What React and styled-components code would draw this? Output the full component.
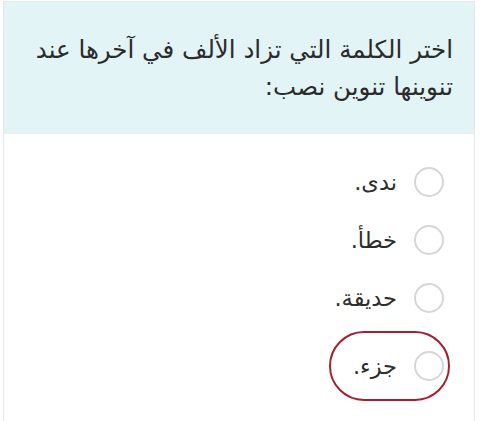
import React from "react";
import styled, { createGlobalStyle } from "styled-components";

const Global = createGlobalStyle`
  html, body { margin: 0; padding: 0; background: #ffffff; }
  body { font-family: "DejaVu Sans", "Noto Sans", sans-serif; }
`;

const Page = styled.div`
  width: 480px;
  height: 421px;
  overflow: hidden;
  padding: 1px 5px 0 3px;
  box-sizing: border-box;
`;

const Card = styled.div`
  border: 1px solid #e6e8e9;
  border-bottom: none;
  height: 440px;
  background: #ffffff;
  direction: rtl;
`;

const Header = styled.div`
  background: #e3f4f7;
  padding: 29px 21px 0 14px;
  height: 132px;
  box-sizing: border-box;
  border-bottom: 1px solid #e8eef0;
`;

const Question = styled.p`
  margin: 0;
  font-size: 24.5px;
  line-height: 37px;
  color: #2b2b2b;
  text-align: right;
`;

const Options = styled.div`
  display: flex;
  flex-direction: column;
  align-items: flex-start;
  gap: 8px;
  padding: 23px 24px 0 0;
`;

const Option = styled.label`
  display: flex;
  align-items: center;
  gap: 17px;
  box-sizing: border-box;
  height: ${(p) => (p.$selected ? "70px" : "50px")};
  padding: 0 4px 0 22px;
  border: 2px solid ${(p) => (p.$selected ? "#a3212f" : "transparent")};
  border-radius: 36px;
  cursor: pointer;
`;

const Radio = styled.span`
  width: 30px;
  height: 30px;
  box-sizing: border-box;
  border: 2px solid #d6d6d6;
  border-radius: 50%;
  background: #ffffff;
  flex: none;
`;

const OptionText = styled.span`
  font-size: 22.5px;
  color: #2e2e2e;
`;

const options = ["ندى.", "خطأ.", "حديقة.", "جزء."];

export default function App() {
  return (
    <>
      <Global />
      <Page>
        <Card>
          <Header>
            <Question>
              اختر الكلمة التي تزاد الألف في آخرها عند تنوينها تنوين نصب:
            </Question>
          </Header>
          <Options>
            {options.map((o, i) => (
              <Option key={o} $selected={i === 3}>
                <Radio />
                <OptionText>{o}</OptionText>
              </Option>
            ))}
          </Options>
        </Card>
      </Page>
    </>
  );
}
